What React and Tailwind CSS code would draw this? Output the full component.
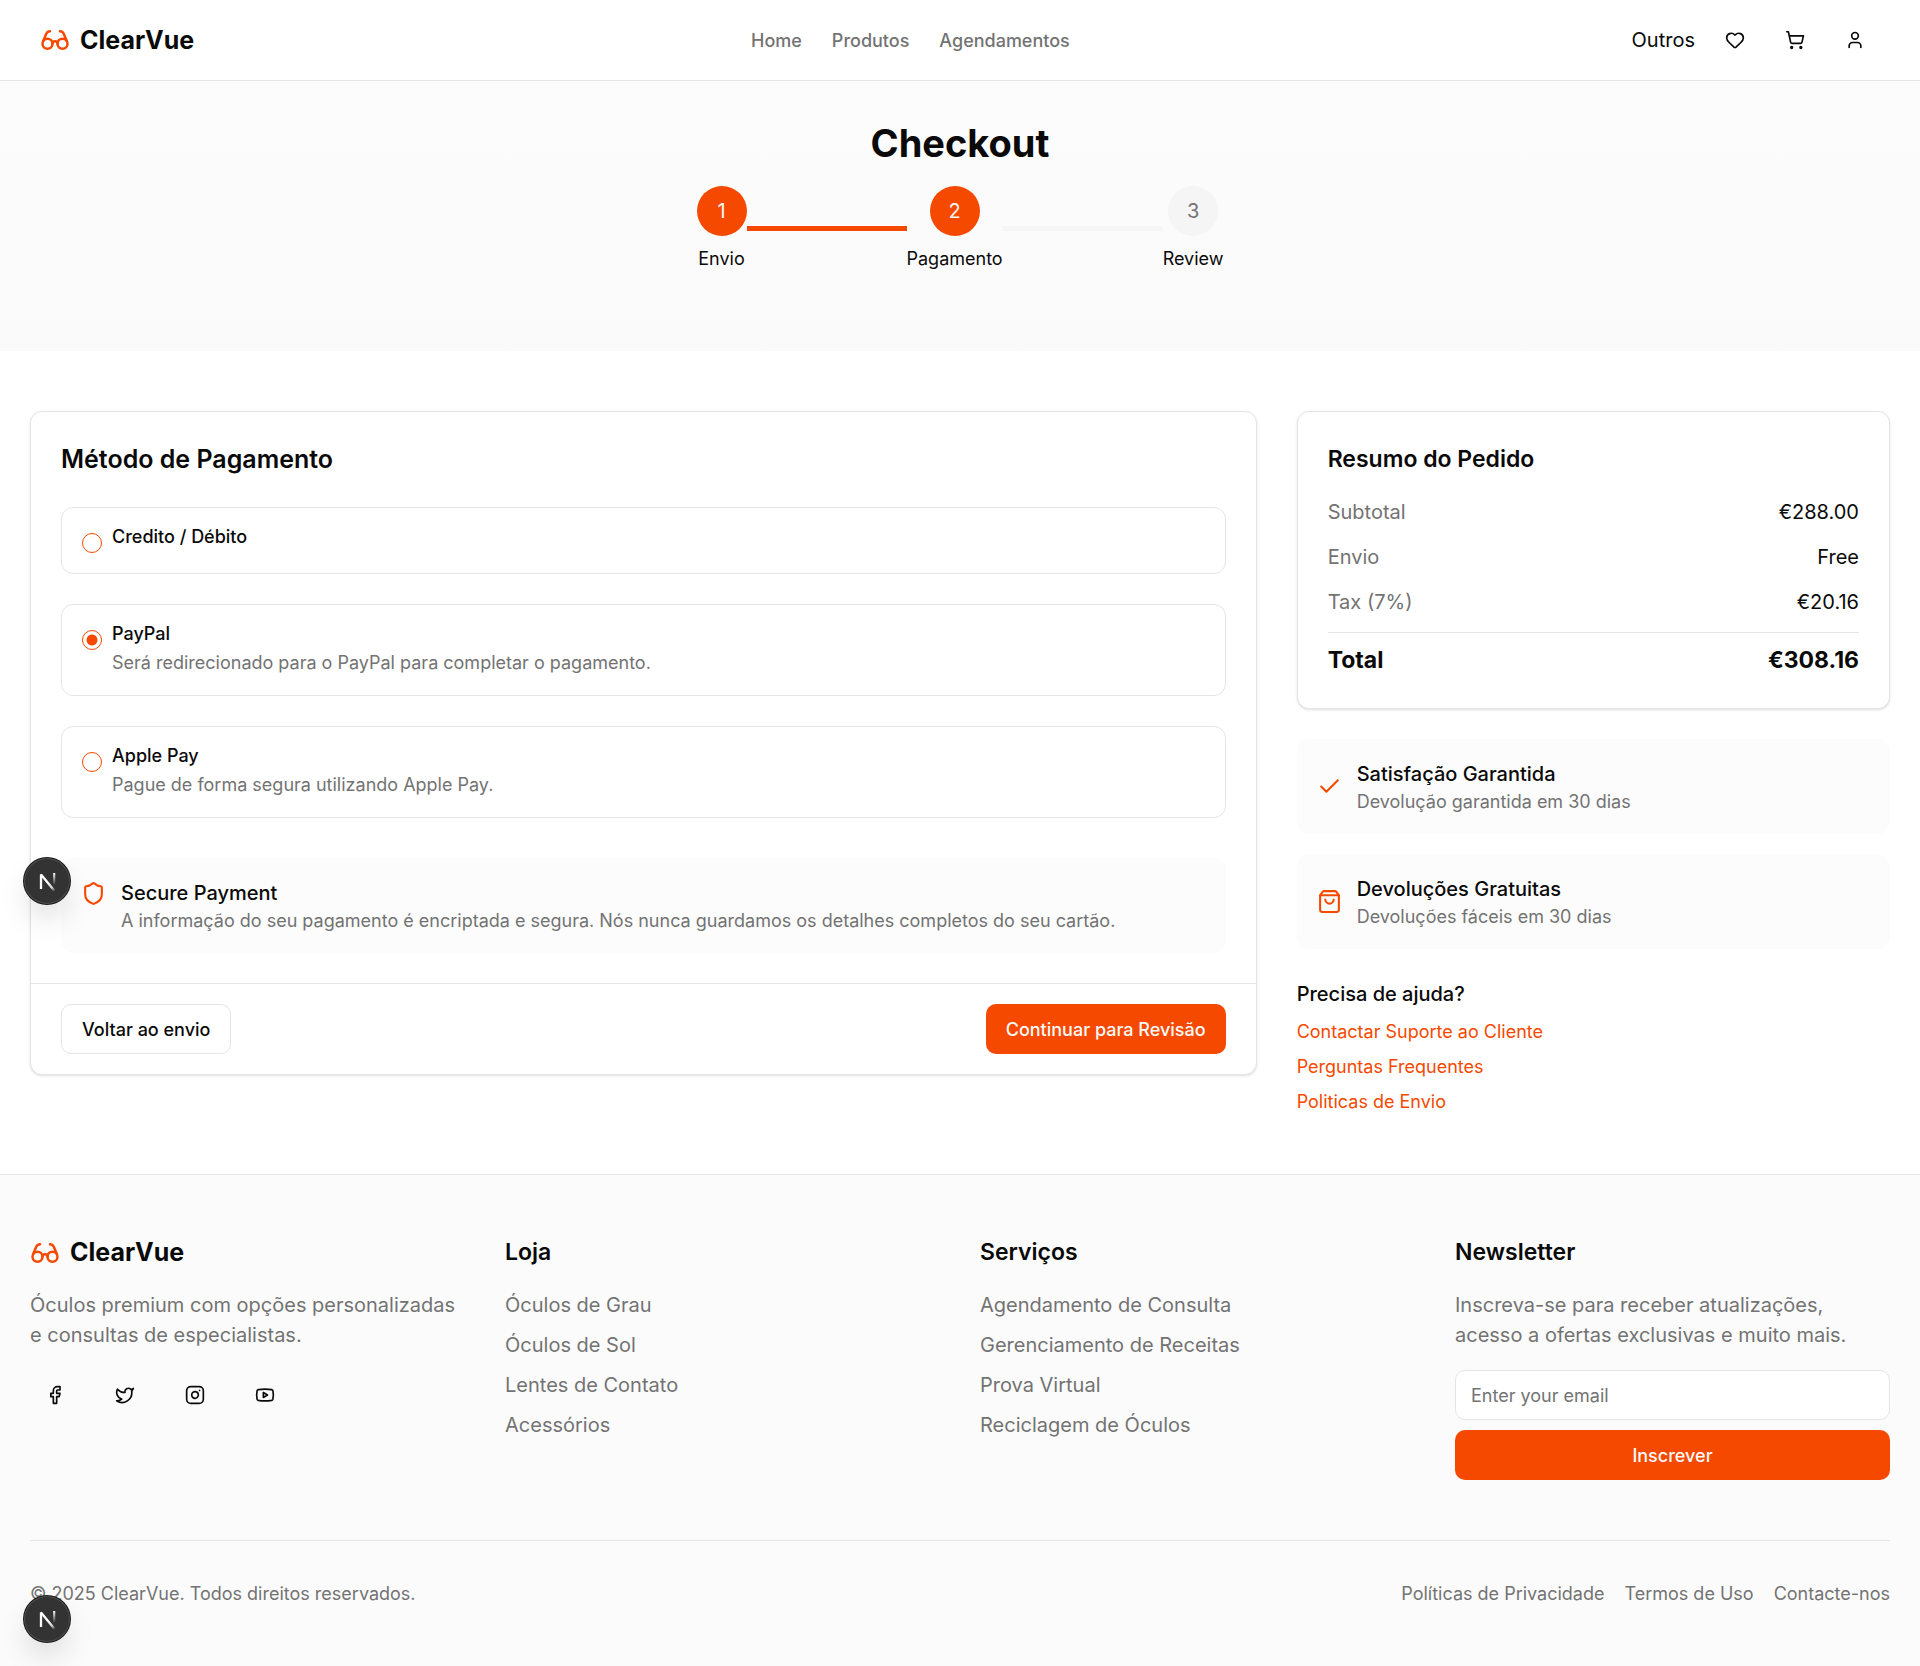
import { useState } from 'react';
import {
  Check,
  Facebook,
  Glasses,
  Heart,
  Instagram,
  Shield,
  ShoppingBag,
  ShoppingCart,
  Twitter,
  User,
  Youtube,
} from 'lucide-react';

const small = 'text-[18px] leading-[25px]';
const focusRing = 'focus-visible:outline-2 focus-visible:outline-[#f54900]';

const steps = [
  { number: 1, label: 'Envio', done: true },
  { number: 2, label: 'Pagamento', done: true },
  { number: 3, label: 'Review', done: false },
];

const methods = [
  { id: 'card', label: 'Credito / Débito' },
  { id: 'paypal', label: 'PayPal', text: 'Será redirecionado para o PayPal para completar o pagamento.' },
  { id: 'apple', label: 'Apple Pay', text: 'Pague de forma segura utilizando Apple Pay.' },
];

const footerLinks = [
  { title: 'Loja', links: ['Óculos de Grau', 'Óculos de Sol', 'Lentes de Contato', 'Acessórios'] },
  {
    title: 'Serviços',
    links: ['Agendamento de Consulta', 'Gerenciamento de Receitas', 'Prova Virtual', 'Reciclagem de Óculos'],
  },
];

function Logo() {
  return (
    <a href="#" className="flex items-center gap-[10px]">
      <Glasses className="size-[30px] text-[#f54900]" />
      <span className="text-[25px] leading-[35px] font-bold">ClearVue</span>
    </a>
  );
}

function IconButton({ icon: Icon, label }) {
  return (
    <button type="button" aria-label={label} className={`flex size-[50px] items-center justify-center rounded-[10px] ${focusRing}`}>
      <Icon className="size-5" />
    </button>
  );
}

function DevBadge({ id, className }) {
  return (
    <button
      type="button"
      aria-label="Dev Tools"
      className={`flex size-[46px] items-center justify-center rounded-full bg-[#333333] shadow-[0_0_0_1px_#171717,inset_0_0_0_1px_rgba(255,255,255,0.14),0_16px_32px_-8px_rgba(0,0,0,0.24)] ${className}`}
    >
      <svg viewBox="0 0 46 46" fill="none" className="size-[46px]" aria-hidden="true">
        <path d="M17 31V16.5L31 33.5" stroke={`url(#${id}-a)`} strokeWidth="2.3" strokeLinejoin="bevel" />
        <path d="M30.2 15v12" stroke={`url(#${id}-b)`} strokeWidth="2.1" />
        <defs>
          <linearGradient id={`${id}-a`} x1="24" y1="24" x2="31" y2="33" gradientUnits="userSpaceOnUse">
            <stop stopColor="white" />
            <stop offset="0.6" stopColor="white" stopOpacity="0.8" />
            <stop offset="1" stopColor="white" stopOpacity="0" />
          </linearGradient>
          <linearGradient id={`${id}-b`} x1="30" y1="15" x2="30" y2="27" gradientUnits="userSpaceOnUse">
            <stop stopColor="white" />
            <stop offset="1" stopColor="white" stopOpacity="0" />
          </linearGradient>
        </defs>
      </svg>
    </button>
  );
}

function Header() {
  return (
    <header className="border-b border-[#e5e5e5] bg-white">
      <div className="flex h-[80px] items-center justify-between px-10">
        <Logo />
        <nav className={`flex items-center gap-[30px] font-medium text-[#737373] ${small}`}>
          <a href="#">Home</a>
          <a href="#">Produtos</a>
          <a href="#">Agendamentos</a>
        </nav>
        <div className="flex items-center gap-[10px]">
          <button type="button" className="px-[5px]">Outros</button>
          <IconButton icon={Heart} label="Favoritos" />
          <IconButton icon={ShoppingCart} label="Carrinho" />
          <IconButton icon={User} label="Conta" />
        </div>
      </div>
    </header>
  );
}

function Hero() {
  return (
    <section className="flex flex-col items-center gap-5 bg-linear-to-b from-[#fcfcfc] to-[#fafafa] pt-10 pb-20">
      <h1 className="text-[38px] leading-[45px] font-bold">Checkout</h1>
      <ol className="flex items-center">
        {steps.map((step, i) => (
          <li key={step.number} className="flex items-center">
            {i > 0 && <span className={`h-[5px] w-40 ${step.done ? 'bg-[#f54900]' : 'bg-[#f5f5f5]'}`} />}
            <span className="flex flex-col items-center gap-[10px]">
              <span
                className={`flex size-[50px] items-center justify-center rounded-full ${
                  step.done ? 'bg-[#f54900] text-[#fafafa]' : 'bg-[#f5f5f5] text-[#737373]'
                }`}
              >
                {step.number}
              </span>
              <span className={small}>{step.label}</span>
            </span>
          </li>
        ))}
      </ol>
    </section>
  );
}

function PaymentCard() {
  const [selected, setSelected] = useState('paypal');
  return (
    <form className="relative rounded-[12px] border border-[#e5e5e5] bg-white shadow-sm lg:col-span-2" onSubmit={(e) => e.preventDefault()}>
      <div className="p-[30px]">
        <h2 className="text-[25px] leading-[35px] font-semibold">Método de Pagamento</h2>
        <div role="radiogroup" aria-label="Método de Pagamento" className="mt-[30px] mb-10 flex flex-col gap-[30px]">
          {methods.map((m) => (
            <div key={m.id} className="flex items-start gap-[10px] rounded-[12px] border border-[#e5e5e5] p-5">
              <input
                type="radio"
                name="method"
                id={m.id}
                checked={selected === m.id}
                onChange={() => setSelected(m.id)}
                className="mt-[5px] size-5 shrink-0 appearance-none rounded-full border border-[#f54900] bg-white checked:bg-radial checked:from-[#f54900] checked:from-[5px] checked:to-white checked:to-[6px]"
              />
              <div className="flex flex-col gap-[7px]">
                <label htmlFor={m.id} className="text-[18px] leading-[18px] font-medium">{m.label}</label>
                {m.text && <p className={`text-[#737373] ${small}`}>{m.text}</p>}
              </div>
            </div>
          ))}
        </div>
        <div className="flex items-start gap-[15px] rounded-[12px] bg-[#fcfcfc] p-5">
          <Shield className="mt-[3px] size-[25px] shrink-0 text-[#f54900]" />
          <div>
            <h3 className="font-medium">Secure Payment</h3>
            <p className={`text-[#737373] ${small}`}>
              A informação do seu pagamento é encriptada e segura. Nós nunca guardamos os detalhes completos do seu cartão.
            </p>
          </div>
        </div>
      </div>
      <div className="flex items-center justify-between border-t border-[#e5e5e5] px-[30px] py-5">
        <button type="button" className={`h-[50px] rounded-[10px] border border-[#e5e5e5] px-5 font-medium ${small} ${focusRing}`}>
          Voltar ao envio
        </button>
        <button type="submit" className={`h-[50px] rounded-[10px] bg-[#f54900] px-5 font-medium text-[#fafafa] ${small} ${focusRing}`}>
          Continuar para Revisão
        </button>
      </div>
      <DevBadge id="badge-card" className="absolute bottom-[170px] -left-[7px]" />
    </form>
  );
}

function SummaryRow({ label, value }) {
  return (
    <div className="flex justify-between">
      <dt className="text-[#737373]">{label}</dt>
      <dd>{value}</dd>
    </div>
  );
}

function Perk({ icon: Icon, title, text }) {
  return (
    <div className="flex items-center gap-[15px] rounded-[12px] bg-[#fcfcfc] p-5">
      <Icon className="size-[25px] shrink-0 text-[#f54900]" />
      <div>
        <h3 className="font-medium">{title}</h3>
        <p className={`text-[#737373] ${small}`}>{text}</p>
      </div>
    </div>
  );
}

function Sidebar() {
  return (
    <aside className="flex flex-col gap-[30px]">
      <section className="rounded-[12px] border border-[#e5e5e5] bg-white p-[30px] shadow-sm">
        <h2 className="mb-5 text-[23px] leading-[35px] font-semibold">Resumo do Pedido</h2>
        <dl className="flex flex-col gap-[15px]">
          <SummaryRow label="Subtotal" value="€288.00" />
          <SummaryRow label="Envio" value="Free" />
          <SummaryRow label="Tax (7%)" value="€20.16" />
          <div className="flex justify-between border-t border-[#e5e5e5] pt-[10px] text-[23px] leading-[35px] font-bold">
            <dt>Total</dt>
            <dd>€308.16</dd>
          </div>
        </dl>
      </section>
      <section className="flex flex-col gap-5">
        <Perk icon={Check} title="Satisfação Garantida" text="Devolução garantida em 30 dias" />
        <Perk icon={ShoppingBag} title="Devoluções Gratuitas" text="Devoluções fáceis em 30 dias" />
      </section>
      <section className="flex flex-col items-start gap-[10px]">
        <h3 className="font-medium">Precisa de ajuda?</h3>
        {['Contactar Suporte ao Cliente', 'Perguntas Frequentes', 'Politicas de Envio'].map((t) => (
          <a key={t} href="#" className={`text-[#f54900] hover:underline ${small}`}>{t}</a>
        ))}
      </section>
    </aside>
  );
}

function Footer() {
  return (
    <footer className="border-t border-[#e5e5e5] bg-[#fbfbfb] px-[30px] py-[60px]">
      <div className="grid grid-cols-1 gap-10 md:grid-cols-2 lg:grid-cols-4">
        <div className="flex flex-col gap-5">
          <Logo />
          <p className="text-[#737373]">Óculos premium com opções personalizadas e consultas de especialistas.</p>
          <div className="flex gap-5">
            <IconButton icon={Facebook} label="Facebook" />
            <IconButton icon={Twitter} label="Twitter" />
            <IconButton icon={Instagram} label="Instagram" />
            <IconButton icon={Youtube} label="YouTube" />
          </div>
        </div>
        {footerLinks.map((col) => (
          <div key={col.title} className="flex flex-col gap-5">
            <h3 className="text-[23px] leading-[35px] font-semibold">{col.title}</h3>
            <ul className="flex flex-col gap-[10px] text-[#737373]">
              {col.links.map((l) => (
                <li key={l}><a href="#">{l}</a></li>
              ))}
            </ul>
          </div>
        ))}
        <div className="flex flex-col gap-5">
          <h3 className="text-[23px] leading-[35px] font-semibold">Newsletter</h3>
          <p className="text-[#737373]">Inscreva-se para receber atualizações, acesso a ofertas exclusivas e muito mais.</p>
          <form className="flex flex-col gap-[10px]" onSubmit={(e) => e.preventDefault()}>
            <input
              type="email"
              aria-label="Email"
              placeholder="Enter your email"
              className={`h-[50px] w-full rounded-[10px] border border-[#e5e5e5] bg-white px-[15px] placeholder:text-[#737373] ${small} ${focusRing}`}
            />
            <button type="submit" className={`h-[50px] rounded-[10px] bg-[#f54900] font-medium text-[#fafafa] ${small} ${focusRing}`}>
              Inscrever
            </button>
          </form>
        </div>
      </div>
      <div className={`mt-[60px] flex flex-wrap items-center justify-between gap-5 border-t border-[#e5e5e5] pt-10 text-[#737373] ${small}`}>
        <p>© 2025 ClearVue. Todos direitos reservados.</p>
        <nav className="flex gap-5">
          <a href="#">Políticas de Privacidade</a>
          <a href="#">Termos de Uso</a>
          <a href="#">Contacte-nos</a>
        </nav>
      </div>
    </footer>
  );
}

export default function App() {
  return (
    <div className="min-h-screen bg-white font-['Inter',sans-serif] text-[20px] leading-[30px] text-[#0a0a0a]">
      <Header />
      <main>
        <Hero />
        <div className="grid grid-cols-1 items-start gap-10 px-[30px] py-[60px] lg:grid-cols-3">
          <PaymentCard />
          <Sidebar />
        </div>
      </main>
      <Footer />
      <DevBadge id="badge-page" className="fixed bottom-6 left-6" />
    </div>
  );
}
